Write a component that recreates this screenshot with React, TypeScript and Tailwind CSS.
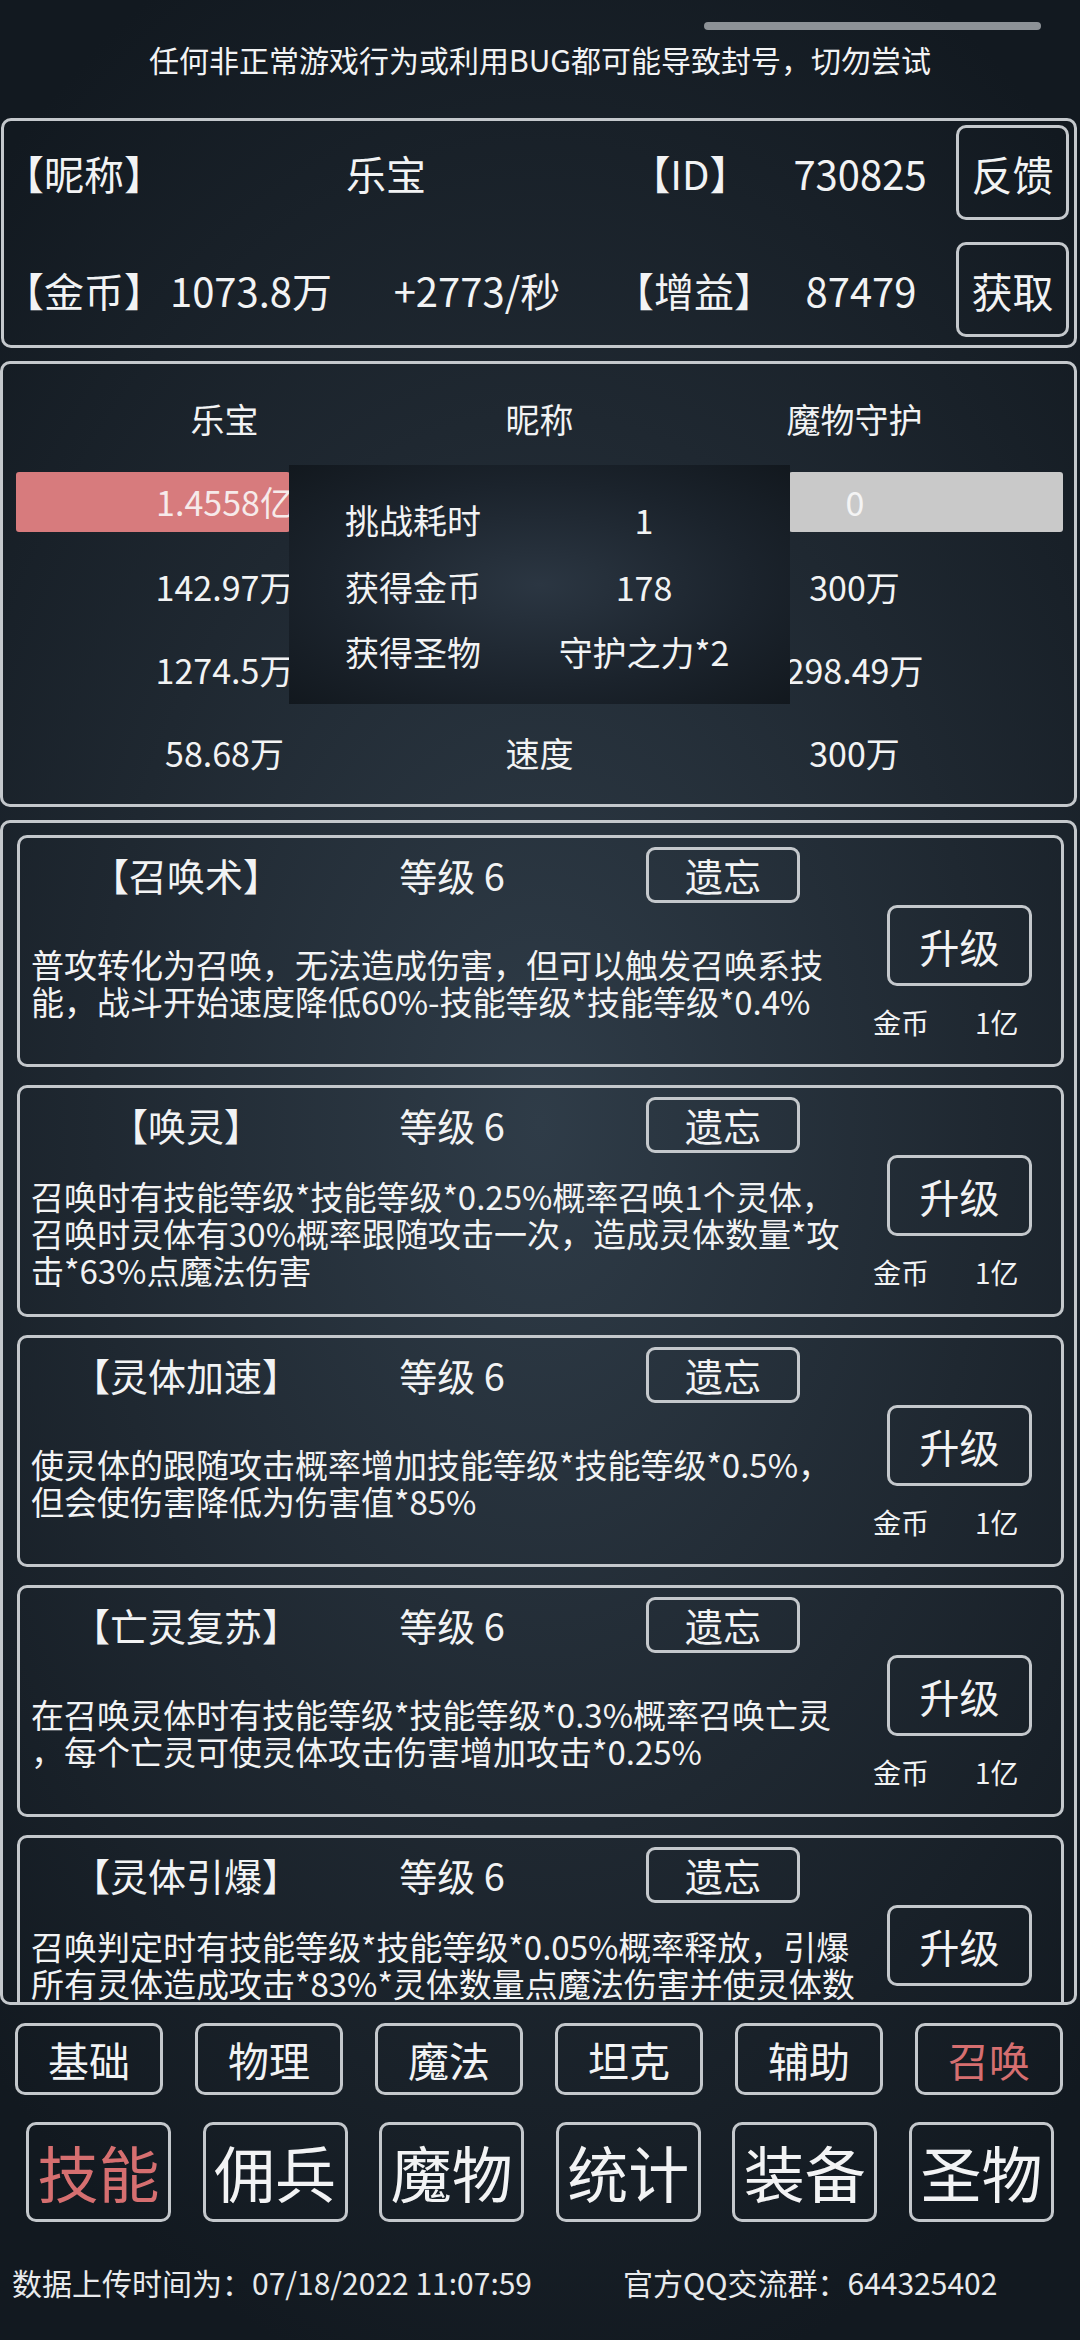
import React from "react";

const skills = [
  {
    name: "【召唤术】",
    lines: [
      "普攻转化为召唤，无法造成伤害，但可以触发召唤系技",
      "能，战斗开始速度降低60%-技能等级*技能等级*0.4%",
    ],
  },
  {
    name: "【唤灵】",
    lines: [
      "召唤时有技能等级*技能等级*0.25%概率召唤1个灵体，",
      "召唤时灵体有30%概率跟随攻击一次，造成灵体数量*攻",
      "击*63%点魔法伤害",
    ],
  },
  {
    name: "【灵体加速】",
    lines: [
      "使灵体的跟随攻击概率增加技能等级*技能等级*0.5%，",
      "但会使伤害降低为伤害值*85%",
    ],
  },
  {
    name: "【亡灵复苏】",
    lines: [
      "在召唤灵体时有技能等级*技能等级*0.3%概率召唤亡灵",
      "，每个亡灵可使灵体攻击伤害增加攻击*0.25%",
    ],
  },
  {
    name: "【灵体引爆】",
    lines: [
      "召唤判定时有技能等级*技能等级*0.05%概率释放，引爆",
      "所有灵体造成攻击*83%*灵体数量点魔法伤害并使灵体数",
      "量归零",
    ],
  },
];

const categories = ["基础", "物理", "魔法", "坦克", "辅助", "召唤"];
const mainTabs = ["技能", "佣兵", "魔物", "统计", "装备", "圣物"];

// Stat rows under the hp bar: left value, label, right value
const statRows = [
  ["142.97万", "攻击", "300万"],
  ["1274.5万", "防御", "298.49万"],
  ["58.68万", "速度", "300万"],
];

function SkillCard({ name, lines }: { name: string; lines: string[] }) {
  return (
    <div className="shrink-0 w-[1047px] h-[232px] border-[3px] border-[#c4c8cc] rounded-[10px]">
      {/* Title row */}
      <div className="flex items-center h-[56px] mt-[9px]">
        <div className="w-[332px] text-center text-[38px] leading-[44px]">{name}</div>
        <div className="w-[200px] text-center text-[38px] leading-[44px]">等级 6</div>
        <button className="ml-[94px] w-[154px] h-[56px] border-[3px] border-[#c4c8cc] rounded-[9px] text-[38px] leading-[44px]">
          遗忘
        </button>
      </div>
      {/* Body */}
      <div className="flex">
        <div className="ml-[11px] w-[830px] h-[160px] flex flex-col justify-center text-[33px] leading-[37px]">
          {lines.map((l, i) => (
            <div key={i} className="whitespace-nowrap">
              {l}
            </div>
          ))}
        </div>
        <div className="ml-[26px] flex flex-col">
          <button className="mt-[2px] w-[145px] h-[81px] border-[3px] border-[#c4c8cc] rounded-[10px] text-[40px] leading-[44px]">
            升级
          </button>
          <div className="flex -ml-[14px] mt-[21px] text-[28px] leading-[30px]">
            <span>金币</span>
            <span className="ml-[46px]">1亿</span>
          </div>
        </div>
      </div>
    </div>
  );
}

export default function App() {
  return (
    <div className="w-[1080px] h-[2340px] overflow-hidden text-[#f2f3f4] font-['Noto_Sans_CJK_SC','Noto_Sans',sans-serif] bg-[radial-gradient(ellipse_75%_55%_at_50%_48%,#2f3c48_0%,#1f2831_55%,#121920_100%)]">
      {/* Drag handle */}
      <div className="flex justify-end pt-[22px] pr-[39px]">
        <div className="w-[337px] h-[8px] rounded-full bg-[#8d9297]" />
      </div>
      <p className="mt-[9px] h-[40px] leading-[40px] text-center text-[30px]">
        任何非正常游戏行为或利用BUG都可能导致封号，切勿尝试
      </p>

      {/* Player info panel */}
      <section className="mt-[39px] ml-[1px] w-[1076px] h-[230px] border-[3px] border-[#c4c8cc] rounded-[10px] pt-[4px] text-[40px] leading-[48px]">
        <div className="flex items-center h-[95px]">
          <div className="w-[158px] text-center">【昵称】</div>
          <div className="w-[448px] text-center">乐宝</div>
          <div className="w-[160px] text-center">【ID】</div>
          <div className="w-[180px] text-center">730825</div>
          <button className="ml-auto mr-[5px] w-[113px] h-[95px] border-[3px] border-[#c4c8cc] rounded-[10px] text-[41px]">
            反馈
          </button>
        </div>
        <div className="flex items-center h-[95px] mt-[22px]">
          <div className="w-[158px] text-center">【金币】</div>
          <div className="w-[178px] text-center">1073.8万</div>
          <div className="w-[274px] text-center">+2773/秒</div>
          <div className="w-[152px] text-center">【增益】</div>
          <div className="w-[190px] text-center">87479</div>
          <button className="ml-auto mr-[5px] w-[113px] h-[95px] border-[3px] border-[#c4c8cc] rounded-[10px] text-[41px]">
            获取
          </button>
        </div>
      </section>

      {/* Battle panel */}
      <section className="relative mt-[13px] w-[1077px] h-[446px] border-[3px] border-[#c4c8cc] rounded-[10px] text-[34px] leading-[40px]">
        <div className="grid grid-cols-[315px_315px_315px] pl-[64px] mt-[25px] h-[60px] items-center text-center">
          <div>乐宝</div>
          <div>昵称</div>
          <div>魔物守护</div>
        </div>
        {/* HP bars */}
        <div className="flex h-[60px] mt-[23px]">
          <div className="ml-[13px] w-[274px] h-[60px] bg-[#d77b7d] rounded-[3px] flex items-center">
            <div className="ml-[51px] w-[316px] shrink-0 text-center text-[#f6eaea]">1.4558亿</div>
          </div>
          <div className="ml-[499px] w-[274px] h-[60px] bg-[#c9c9c9] rounded-[3px] flex items-center">
            <div className="-ml-[92px] w-[316px] shrink-0 text-center text-[#f4f4f4]">0</div>
          </div>
        </div>
        {statRows.map(([a, b, c], i) => (
          <div
            key={b}
            className={`grid grid-cols-[315px_315px_315px] pl-[64px] h-[60px] items-center text-center ${i === 0 ? "mt-[25px]" : "mt-[23px]"}`}
          >
            <div>{a}</div>
            <div>{b}</div>
            <div>{c}</div>
          </div>
        ))}

        {/* Battle result popup */}
        <div className="absolute left-[286px] top-[101px] w-[501px] h-[239px] bg-[radial-gradient(ellipse_at_center,#2b3642_0%,#1b232c_60%,#12181e_100%)]">
          <div className="grid grid-cols-[248px_214px] h-[50px] mt-[30px] items-center text-center">
            <div>挑战耗时</div>
            <div>1</div>
          </div>
          <div className="grid grid-cols-[248px_214px] h-[50px] mt-[17px] items-center text-center">
            <div>获得金币</div>
            <div>178</div>
          </div>
          <div className="grid grid-cols-[248px_214px] h-[50px] mt-[15px] items-center text-center">
            <div>获得圣物</div>
            <div>守护之力*2</div>
          </div>
        </div>
      </section>

      {/* Skill list */}
      <section className="mt-[13px] w-[1077px] h-[1185px] border-[3px] border-[#c4c8cc] rounded-[10px] overflow-hidden">
        <div className="flex flex-col gap-[18px] pt-[12px] pl-[14px]">
          {skills.map((s) => (
            <SkillCard key={s.name} name={s.name} lines={s.lines} />
          ))}
        </div>
      </section>

      {/* Category tabs */}
      <div className="flex gap-[32px] pl-[15px] mt-[18px]">
        {categories.map((c) => (
          <button
            key={c}
            className={`w-[148px] h-[72px] border-[3px] border-[#c4c8cc] rounded-[10px] text-[41px] leading-[46px] ${c === "召唤" ? "text-[#d66f70]" : ""}`}
          >
            {c}
          </button>
        ))}
      </div>

      {/* Main tabs */}
      <div className="flex gap-[31.6px] pl-[26px] mt-[27px]">
        {mainTabs.map((t) => (
          <button
            key={t}
            className={`w-[145px] h-[100px] border-[3px] border-[#c4c8cc] rounded-[10px] text-[61px] leading-[66px] ${t === "技能" ? "text-[#d66f70]" : ""}`}
          >
            {t}
          </button>
        ))}
      </div>

      {/* Footer */}
      <div className="flex mt-[40px] pl-[12px] h-[40px] items-center text-[30px] leading-[40px] text-[#e8eaec]">
        <span className="w-[611px] whitespace-nowrap">数据上传时间为：07/18/2022 11:07:59</span>
        <span className="whitespace-nowrap">官方QQ交流群：644325402</span>
      </div>
    </div>
  );
}
